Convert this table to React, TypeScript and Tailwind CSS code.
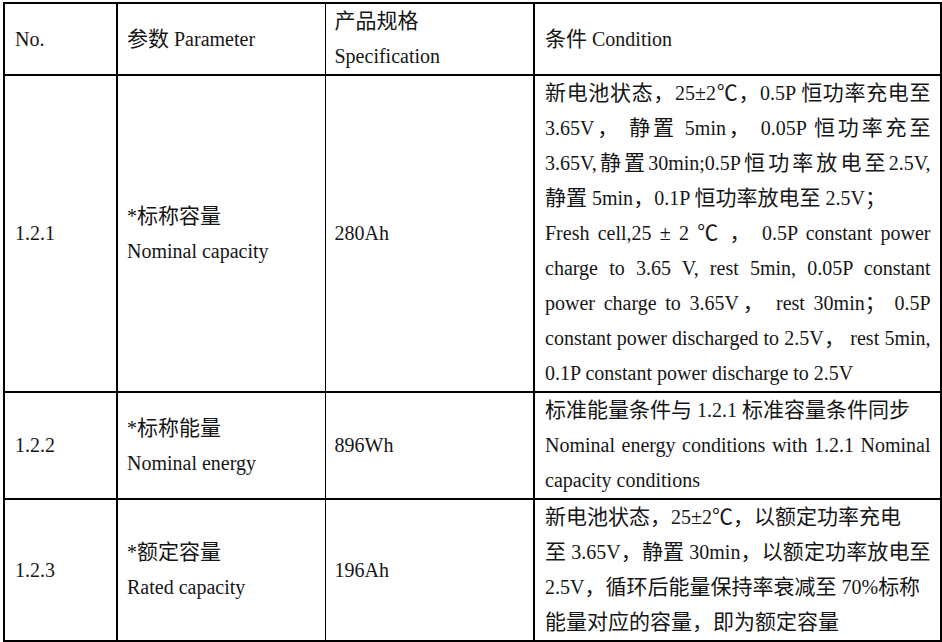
import type { ReactNode } from "react";

const CJK = /([\u2E80-\u9FFF\u3000-\u303F\uFF00-\uFFEF\u2103]+)/;

// wrap the chinese runs so they come out a bit larger than the latin text, like in the source doc
const Mixed = ({ s }: { s: string }) => (
    <>
        {s.split(CJK).map((part, i) =>
            i % 2 ? (
                <span key={i} className="text-[21px]">
                    {part}
                </span>
            ) : (
                part
            )
        )}
    </>
);

type Line = { t: string; j?: boolean };

const Lines = ({ lines }: { lines: Line[] }) => (
    <>
        {lines.map((line, i) => (
            <div
                key={i}
                className={line.j ? "whitespace-nowrap text-justify [text-align-last:justify]" : "whitespace-nowrap"}
            >
                <Mixed s={line.t} />
            </div>
        ))}
    </>
);

const rows: { no: string; param: string[]; spec: string; cond: Line[] }[] = [
    {
        no: "1.2.1",
        param: ["*标称容量", "Nominal capacity"],
        spec: "280Ah",
        cond: [
            { t: "新电池状态，25±2℃，0.5P 恒功率充电至", j: true },
            { t: "3.65V， 静置 5min， 0.05P 恒功率充至", j: true },
            { t: "3.65V,静置30min;0.5P恒功率放电至2.5V,", j: true },
            { t: "静置 5min，0.1P 恒功率放电至 2.5V；" },
            { t: "Fresh cell,25 ± 2 ℃ ， 0.5P constant power", j: true },
            { t: "charge to 3.65 V, rest 5min, 0.05P constant", j: true },
            { t: "power charge to 3.65V， rest 30min； 0.5P", j: true },
            { t: "constant power discharged to 2.5V， rest 5min,", j: true },
            { t: "0.1P constant power discharge to 2.5V" },
        ],
    },
    {
        no: "1.2.2",
        param: ["*标称能量", "Nominal energy"],
        spec: "896Wh",
        cond: [
            { t: "标准能量条件与 1.2.1 标准容量条件同步" },
            { t: "Nominal energy conditions with 1.2.1 Nominal", j: true },
            { t: "capacity conditions" },
        ],
    },
    {
        no: "1.2.3",
        param: ["*额定容量", "Rated capacity"],
        spec: "196Ah",
        cond: [
            { t: "新电池状态，25±2℃，以额定功率充电" },
            { t: "至 3.65V，静置 30min，以额定功率放电至", j: true },
            { t: "2.5V，循环后能量保持率衰减至 70%标称" },
            { t: "能量对应的容量，即为额定容量" },
        ],
    },
];

const c1 = "border-y-2 border-l-2 border-r-2 border-black px-[10px] align-middle";
const c2 = "border-y-2 border-l-2 border-r border-black pl-[9px] pr-2 align-middle";
const c3 = "border-y-2 border-l border-r-2 border-black pl-[9px] pr-2 align-middle";
const c4 = "border-y-2 border-l-2 border-r-[3px] border-black pl-[10px] pr-[9px] align-middle";

export default function App() {
    return (
        <div className="min-h-screen bg-white pt-[2px] pl-[3px]">
            <table
                className="w-[937px] table-fixed border-collapse text-left text-[20px] leading-[35px] text-[#161616]"
                style={{ fontFamily: '"Liberation Serif", "Noto Sans CJK SC", serif' }}
            >
                <colgroup>
                    <col className="w-[113px]" />
                    <col className="w-[208px]" />
                    <col className="w-[209px]" />
                    <col className="w-[407px]" />
                </colgroup>
                <thead>
                    <tr className="font-normal">
                        <th className={`${c1} font-normal`}>No.</th>
                        <th className={`${c2} font-normal`}>
                            <Mixed s="参数 Parameter" />
                        </th>
                        <th className={`${c3} font-normal`}>
                            <div>
                                <Mixed s="产品规格" />
                            </div>
                            <div>Specification</div>
                        </th>
                        <th className={`${c4} font-normal`}>
                            <Mixed s="条件 Condition" />
                        </th>
                    </tr>
                </thead>
                <tbody>
                    {rows.map((row) => (
                        <tr key={row.no}>
                            <td className={c1}>{row.no}</td>
                            <td className={c2}>
                                {row.param.map((p) => (
                                    <div key={p}>
                                        <Mixed s={p} />
                                    </div>
                                ))}
                            </td>
                            <td className={c3}>{row.spec}</td>
                            <td className={c4}>
                                <Lines lines={row.cond} />
                            </td>
                        </tr>
                    ))}
                </tbody>
            </table>
        </div>
    );
}
